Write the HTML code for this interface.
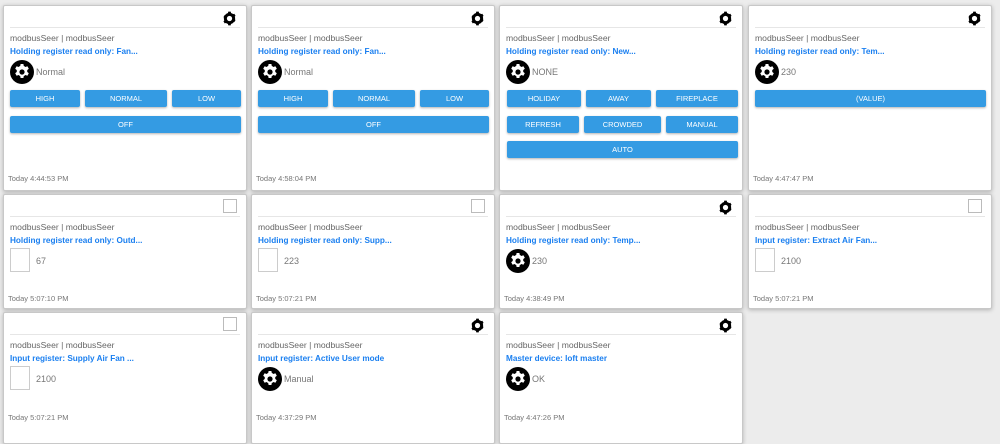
<!DOCTYPE html>
<html><head><style>
body{margin:0;width:1000px;height:426px;overflow:hidden;background:#ececec;font-family:"Liberation Sans",sans-serif;position:relative}
.c{position:absolute;width:242px;background:#fff;border:1px solid #c8c8c8;border-radius:2px;box-shadow:0 1px 4px rgba(0,0,0,.25)}
.g{position:absolute;right:9px;top:5px;width:15px;height:15px}
.im{position:absolute;right:9px;top:4px;width:12px;height:12px;border:1px solid #bbb}
.d{position:absolute;left:6px;right:6px;top:21px;border-top:1px solid #e6e6e6}
.s{position:absolute;left:6px;top:27px;font-size:8.6px;color:#666}
.t{position:absolute;left:6px;top:41px;font-size:8.2px;font-weight:bold;color:#1a7ff0}
.bi{position:absolute;left:6px;top:54px;width:24px;height:24px}
.ib{position:absolute;left:6px;top:53px;width:18px;height:22px;border:1px solid #ccc}
.v{position:absolute;left:32px;top:61px;font-size:9px;color:#777}
.b{position:absolute;height:17px;background:#349be3;color:#fff;font-size:7.5px;line-height:17px;text-align:center;border-radius:2px;box-shadow:0 1px 2px rgba(0,0,0,.3)}
.ts{position:absolute;left:4px;font-size:7.5px;color:#777}
</style></head><body>
<svg width="0" height="0" style="position:absolute"><defs>
<symbol id="gear" viewBox="0 0 24 24"><circle cx="12" cy="12" r="9" fill="#000"/><path fill="#000" d="M10 1h4l.6 3a8 8 0 0 1 2.2 1.3l2.9-1 2 3.4-2.3 2a8 8 0 0 1 0 2.6l2.3 2-2 3.4-2.9-1a8 8 0 0 1-2.2 1.3L14 23h-4l-.6-3a8 8 0 0 1-2.2-1.3l-2.9 1-2-3.4 2.3-2a8 8 0 0 1 0-2.6l-2.3-2 2-3.4 2.9 1A8 8 0 0 1 9.4 4z"/><circle cx="12" cy="12" r="4.2" fill="#fff"/></symbol>
<symbol id="big" viewBox="0 0 24 24"><circle cx="12" cy="12" r="12" fill="#000"/><path fill="#fff" d="M10.6 4h2.8l.4 2a6 6 0 0 1 1.6 1l2-.7 1.4 2.4-1.6 1.4a6 6 0 0 1 0 1.8l1.6 1.4-1.4 2.4-2-.7a6 6 0 0 1-1.6 1l-.4 2h-2.8l-.4-2a6 6 0 0 1-1.6-1l-2 .7-1.4-2.4 1.6-1.4a6 6 0 0 1 0-1.8L5.2 8.7l1.4-2.4 2 .7a6 6 0 0 1 1.6-1z"/><circle cx="12" cy="12" r="2.6" fill="#000"/></symbol>
</defs></svg>

<div class="c" style="left:3px;top:5px;height:184px">
<svg class="g"><use href="#gear"/></svg><div class="d"></div>
<div class="s">modbusSeer | modbusSeer</div><div class="t">Holding register read only: Fan...</div>
<svg class="bi"><use href="#big"/></svg><div class="v">Normal</div>
<div class="b" style="left:6px;top:84px;width:70px">HIGH</div>
<div class="b" style="left:81px;top:84px;width:82px">NORMAL</div>
<div class="b" style="left:168px;top:84px;width:69px">LOW</div>
<div class="b" style="left:6px;top:110px;width:231px">OFF</div>
<div class="ts" style="top:168px">Today 4:44:53 PM</div></div>

<div class="c" style="left:251px;top:5px;height:184px">
<svg class="g"><use href="#gear"/></svg><div class="d"></div>
<div class="s">modbusSeer | modbusSeer</div><div class="t">Holding register read only: Fan...</div>
<svg class="bi"><use href="#big"/></svg><div class="v">Normal</div>
<div class="b" style="left:6px;top:84px;width:70px">HIGH</div>
<div class="b" style="left:81px;top:84px;width:82px">NORMAL</div>
<div class="b" style="left:168px;top:84px;width:69px">LOW</div>
<div class="b" style="left:6px;top:110px;width:231px">OFF</div>
<div class="ts" style="top:168px">Today 4:58:04 PM</div></div>

<div class="c" style="left:499px;top:5px;height:184px">
<svg class="g"><use href="#gear"/></svg><div class="d"></div>
<div class="s">modbusSeer | modbusSeer</div><div class="t">Holding register read only: New...</div>
<svg class="bi"><use href="#big"/></svg><div class="v">NONE</div>
<div class="b" style="left:7px;top:84px;width:74px">HOLIDAY</div>
<div class="b" style="left:86px;top:84px;width:65px">AWAY</div>
<div class="b" style="left:156px;top:84px;width:82px">FIREPLACE</div>
<div class="b" style="left:7px;top:110px;width:72px">REFRESH</div>
<div class="b" style="left:84px;top:110px;width:77px">CROWDED</div>
<div class="b" style="left:166px;top:110px;width:72px">MANUAL</div>
<div class="b" style="left:7px;top:135px;width:231px">AUTO</div></div>

<div class="c" style="left:748px;top:5px;height:184px">
<svg class="g"><use href="#gear"/></svg><div class="d"></div>
<div class="s">modbusSeer | modbusSeer</div><div class="t">Holding register read only: Tem...</div>
<svg class="bi"><use href="#big"/></svg><div class="v">230</div>
<div class="b" style="left:6px;top:84px;width:231px">(VALUE)</div>
<div class="ts" style="top:168px">Today 4:47:47 PM</div></div>

<div class="c" style="left:3px;top:194px;height:113px">
<div class="im"></div><div class="d"></div>
<div class="s">modbusSeer | modbusSeer</div><div class="t">Holding register read only: Outd...</div>
<div class="ib"></div><div class="v">67</div>
<div class="ts" style="top:99px">Today 5:07:10 PM</div></div>

<div class="c" style="left:251px;top:194px;height:113px">
<div class="im"></div><div class="d"></div>
<div class="s">modbusSeer | modbusSeer</div><div class="t">Holding register read only: Supp...</div>
<div class="ib"></div><div class="v">223</div>
<div class="ts" style="top:99px">Today 5:07:21 PM</div></div>

<div class="c" style="left:499px;top:194px;height:113px">
<svg class="g"><use href="#gear"/></svg><div class="d"></div>
<div class="s">modbusSeer | modbusSeer</div><div class="t">Holding register read only: Temp...</div>
<svg class="bi"><use href="#big"/></svg><div class="v">230</div>
<div class="ts" style="top:99px">Today 4:38:49 PM</div></div>

<div class="c" style="left:748px;top:194px;height:113px">
<div class="im"></div><div class="d"></div>
<div class="s">modbusSeer | modbusSeer</div><div class="t">Input register: Extract Air Fan...</div>
<div class="ib"></div><div class="v">2100</div>
<div class="ts" style="top:99px">Today 5:07:21 PM</div></div>

<div class="c" style="left:3px;top:312px;height:130px">
<div class="im"></div><div class="d"></div>
<div class="s">modbusSeer | modbusSeer</div><div class="t">Input register: Supply Air Fan ...</div>
<div class="ib"></div><div class="v">2100</div>
<div class="ts" style="top:100px">Today 5:07:21 PM</div></div>

<div class="c" style="left:251px;top:312px;height:130px">
<svg class="g"><use href="#gear"/></svg><div class="d"></div>
<div class="s">modbusSeer | modbusSeer</div><div class="t">Input register: Active User mode</div>
<svg class="bi"><use href="#big"/></svg><div class="v">Manual</div>
<div class="ts" style="top:100px">Today 4:37:29 PM</div></div>

<div class="c" style="left:499px;top:312px;height:130px">
<svg class="g"><use href="#gear"/></svg><div class="d"></div>
<div class="s">modbusSeer | modbusSeer</div><div class="t">Master device: loft master</div>
<svg class="bi"><use href="#big"/></svg><div class="v">OK</div>
<div class="ts" style="top:100px">Today 4:47:26 PM</div></div>
</body></html>
